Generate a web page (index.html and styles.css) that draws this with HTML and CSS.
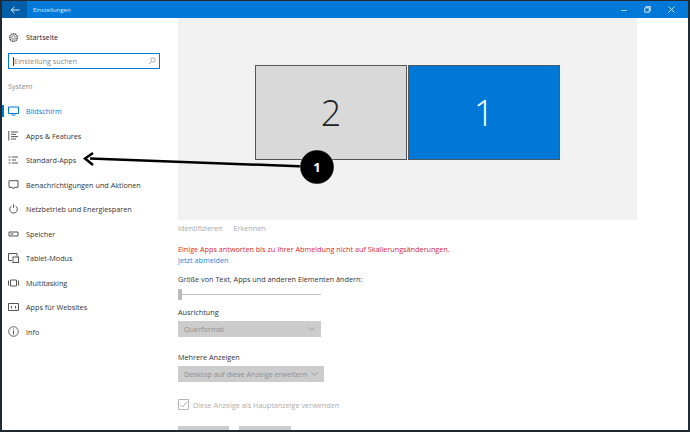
FILE: index.html
```html
<!DOCTYPE html>
<html lang="de">
<head>
<meta charset="utf-8">
<title>Einstellungen</title>
<link rel="stylesheet" href="styles.css">
</head>
<body>
<div class="window">
  <header class="titlebar">
    <div class="back"><svg width="10" height="8" viewBox="0 0 10 8"><path d="M4.5 .8 1.2 4l3.3 3.2M1.2 4H9.5" fill="none" stroke="#dcecf8" stroke-width="1"/></svg></div>
    <div class="title">Einstellungen</div>
    <div class="controls">
      <svg width="6" height="6" viewBox="0 0 6 6"><path d="M0 3.5h6" stroke="#9fd0f2" stroke-width="1"/></svg>
      <svg width="7" height="7" viewBox="0 0 7 7"><path d="M.8 1.8h4.4v4.4H.8zM2 1.5V.6h4.4v4.2h-1" fill="none" stroke="#cfe6f7" stroke-width="1"/></svg>
      <svg width="7" height="7" viewBox="0 0 7 7"><path d="M.5.5l6 6M6.500.5l-6 6" stroke="#cfe6f7" stroke-width="1"/></svg>
    </div>
  </header>
  <div class="body">
    <nav class="sidebar">
      <div class="home">
        <svg class="ico" width="11" height="11" viewBox="0 0 11 11"><circle cx="5.500" cy="5.500" r="3.800" fill="none" stroke="#555" stroke-width="1.500" stroke-dasharray="1.500 .6"/><circle cx="5.500" cy="5.500" r="1.800" fill="none" stroke="#555" stroke-width=".8"/></svg>
        <span>Startseite</span>
      </div>
      <div class="search">
        <span class="caret"></span><span class="placeholder">Einstellung suchen</span>
        <svg width="8" height="8" viewBox="0 0 8 8"><circle cx="5" cy="3" r="2.200" fill="none" stroke="#999" stroke-width=".8"/><path d="M3.400 4.600.8 7.200" stroke="#999" stroke-width=".8"/></svg>
      </div>
      <div class="section">System</div>
      <ul class="menu">
        <li class="item active">
          <svg class="ico" width="11" height="10" viewBox="0 0 11 10"><path d="M.5 1h10v6.500H.5zM3.500 9h4" fill="none" stroke="#0078d7" stroke-width="1"/></svg>
          <span>Bildschirm</span>
        </li>
        <li class="item">
          <svg class="ico" width="10" height="10" viewBox="0 0 10 10"><path d="M2.500 1h7M2.500 3.300h5M2.500 5.600h7M2.500 8h5M.3 0v9.500" fill="none" stroke="#555" stroke-width="1"/></svg>
          <span>Apps &amp; Features</span>
        </li>
        <li class="item">
          <svg class="ico" width="10" height="8" viewBox="0 0 10 8"><path d="M0 1h2M3.500 1h6M0 4h2M3.500 4h4M0 7h2M3.500 7h6" fill="none" stroke="#555" stroke-width="1"/></svg>
          <span>Standard-Apps</span>
        </li>
        <li class="item">
          <svg class="ico" width="10" height="10" viewBox="0 0 10 10"><path d="M.5.700h9v6.600H6L5 9 4 7.300H.5z" fill="none" stroke="#555" stroke-width="1"/></svg>
          <span>Benachrichtigungen und Aktionen</span>
        </li>
        <li class="item">
          <svg class="ico" width="10" height="10" viewBox="0 0 10 10"><path d="M3 2A3.800 3.800 0 1 0 7 2M5 .3v3.500" fill="none" stroke="#555" stroke-width="1"/></svg>
          <span>Netzbetrieb und Energiesparen</span>
        </li>
        <li class="item">
          <svg class="ico" width="10" height="6" viewBox="0 0 10 6"><path d="M.5 1h9v4h-9z" fill="none" stroke="#555" stroke-width="1"/><path d="M2 3h3" stroke="#555" stroke-width="1"/></svg>
          <span>Speicher</span>
        </li>
        <li class="item">
          <svg class="ico" width="11" height="10" viewBox="0 0 11 10"><path d="M4 7.500H.5v-7h8.500v3" fill="none" stroke="#555" stroke-width="1"/><rect x="5" y="4" width="5.500" height="5.500" fill="none" stroke="#555" stroke-width="1"/></svg>
          <span>Tablet-Modus</span>
        </li>
        <li class="item">
          <svg class="ico" width="11" height="8" viewBox="0 0 11 8"><path d="M2.500 1h6v6h-6zM.5 1.500v5M10.500 1.500v5" fill="none" stroke="#555" stroke-width="1"/></svg>
          <span>Multitasking</span>
        </li>
        <li class="item">
          <svg class="ico" width="11" height="8" viewBox="0 0 11 8"><path d="M.5.500h10v7H.5zM3.500 3v2.500M7.500 3v2.500" fill="none" stroke="#555" stroke-width="1"/></svg>
          <span>Apps für Websites</span>
        </li>
        <li class="item">
          <svg class="ico" width="11" height="11" viewBox="0 0 11 11"><circle cx="5.500" cy="5.500" r="4.800" fill="none" stroke="#555" stroke-width=".9"/><path d="M5.500 4.500v4M5.500 2.500v1" stroke="#555" stroke-width="1"/></svg>
          <span>Info</span>
        </li>
      </ul>
    </nav>
    <main class="content">
      <section class="preview">
        <div class="monitor other">2</div>
        <div class="monitor primary">1</div>
      </section>
      <div class="links"><span>Identifizieren</span><span>Erkennen</span></div>
      <p class="warning">Einige Apps antworten bis zu Ihrer Abmeldung nicht auf Skalierungsänderungen.</p>
      <p class="signout">Jetzt abmelden</p>
      <p class="label scale-label">Größe von Text, Apps und anderen Elementen ändern:</p>
      <div class="slider"><span class="thumb"></span></div>
      <p class="label orient-label">Ausrichtung</p>
      <div class="select orient"><span>Querformat</span><svg width="7" height="4" viewBox="0 0 7 4"><path d="M.5.300 3.500 3.300 6.500.300" fill="none" stroke="#929292" stroke-width=".9"/></svg></div>
      <p class="label multi-label">Mehrere Anzeigen</p>
      <div class="select multi"><span>Desktop auf diese Anzeige erweitern</span><svg width="7" height="4" viewBox="0 0 7 4"><path d="M.5.300 3.500 3.300 6.500.300" fill="none" stroke="#929292" stroke-width=".9"/></svg></div>
      <div class="check">
        <svg width="11" height="11" viewBox="0 0 11 11"><path d="M.5.500h10v10H.5z" fill="none" stroke="#b5b5b5" stroke-width="1"/><path d="M2 5.500l2.500 2.500L9 2.500" fill="none" stroke="#b5b5b5" stroke-width="1"/></svg>
        <span>Diese Anzeige als Hauptanzeige verwenden</span>
      </div>
      <div class="buttons"><span class="button first"></span><span class="button second"></span></div>
    </main>
  </div>
  <svg class="annotation" width="690" height="432" viewBox="0 0 690 432">
    <path d="M318 167 90 158.500" fill="none" stroke="#000" stroke-width="2.500"/>
    <path d="M93 153 85 158.500 93 165" fill="none" stroke="#000" stroke-width="2.500"/>
    <circle cx="317" cy="167" r="17" fill="#000"/>
    <circle cx="317" cy="167" r="17" fill="none" stroke="#fff" stroke-opacity=".6" stroke-width=".6"/>
    <text x="317" y="172" text-anchor="middle" class="badge">1</text>
  </svg>
</div>
</body>
</html>
```

FILE: styles.css
```css
* { box-sizing: border-box; }
html, body { margin: 0; padding: 0; background: #fff; }
body { width: 690px; height: 432px; overflow: hidden; font-family: "Open Sans", "Noto Sans", sans-serif; }
p { margin: 0; }
ul { list-style: none; margin: 0; padding: 0; }

.window { position: relative; width: 690px; height: 432px; border: 1px solid #1f2a33; border-width: 1px 2px 2px 2px; display: flex; flex-direction: column; overflow: hidden; background: #fff; }

.titlebar { flex: none; height: 17px; background: #0078d7; display: flex; align-items: center; color: #dcecf8; }
.back { width: 25px; height: 100%; background: #005fa8; display: flex; align-items: center; justify-content: center; }
.title { margin-left: 6px; font-size: 6px; }
.controls { margin-left: auto; display: flex; align-items: center; gap: 17px; padding-right: 13px; }

.body { flex: 1; display: flex; min-height: 0; }
.sidebar { flex: none; width: 176px; color: #333; font-size: 7.250px; }
.home { display: flex; align-items: center; height: 14px; margin: 12px 0 0 6px; color: #222; }
.search { display: flex; align-items: center; width: 152px; height: 16px; margin: 9px 0 0 6px; border: 1.500px solid #0078d7; padding: 0 3px 0 4px; color: #8a8a8a; }
.caret { width: 1px; height: 9px; background: #333; }
.placeholder { flex: 1; }
.section { margin: 11px 0 0 6px; height: 12px; line-height: 12px; color: #8a8a8a; }
.menu { margin-top: 7px; }
.item { position: relative; display: flex; align-items: center; height: 24.500px; padding-left: 6px; }
.ico { flex: none; margin-right: 7px; }
.item .ico { width: 11px; }
.active { color: #0078d7; }
.active::before { content: ""; position: absolute; left: 0; top: 6px; width: 2px; height: 12px; background: #0078d7; }

.content { flex: 1; min-width: 0; font-size: 7.250px; color: #333; }
.preview { width: 459px; height: 202px; background: #f2f2f2; display: flex; gap: 1px; padding: 47px 0 0 77px; }
.monitor { width: 152px; height: 95px; border: 1px solid #555; display: flex; align-items: center; justify-content: center; font-family: "Open Sans", sans-serif; font-weight: 300; font-size: 36px; }
.other { background: #d9d9d9; color: #222; }
.primary { background: #0078d7; color: #fff; border-color: #4c5a66; }

.links { display: flex; gap: 11px; margin-top: 3px; height: 10px; line-height: 10px; color: #a8a8a8; }
.warning { margin-top: 11px; height: 11px; line-height: 11px; color: #d9292f; }
.signout { height: 10px; line-height: 10px; color: #1a86dc; }
.label { height: 11px; line-height: 11px; color: #333; }
.scale-label { margin-top: 9px; }
.slider { position: relative; width: 143px; height: 14px; margin-top: 2px; }
.slider::before { content: ""; position: absolute; left: 0; right: 0; top: 7px; height: 1px; background: #c2c2c2; }
.thumb { position: absolute; left: 0; top: 2px; width: 4px; height: 11px; background: #b9b9b9; border-radius: 1px; }
.orient-label { margin-top: 6px; }
.select { display: flex; align-items: center; justify-content: space-between; height: 16px; margin-top: 3px; padding: 0 6px 0 6px; background: #cccccc; color: #8f8f8f; white-space: nowrap; }
.orient { width: 143px; }
.multi-label { margin-top: 15px; }
.multi { width: 146px; }
.check { display: flex; align-items: center; gap: 4px; margin-top: 17px; height: 11px; color: #adadad; }
.buttons { display: flex; gap: 10px; margin-top: 16px; }
.button { height: 20px; background: #cccccc; }
.first { width: 51px; }
.second { width: 52px; }

.annotation { position: absolute; left: -2px; top: -1px; pointer-events: none; }
.badge { fill: #fff; font-family: "Open Sans", sans-serif; font-weight: 700; font-size: 13px; }
```
